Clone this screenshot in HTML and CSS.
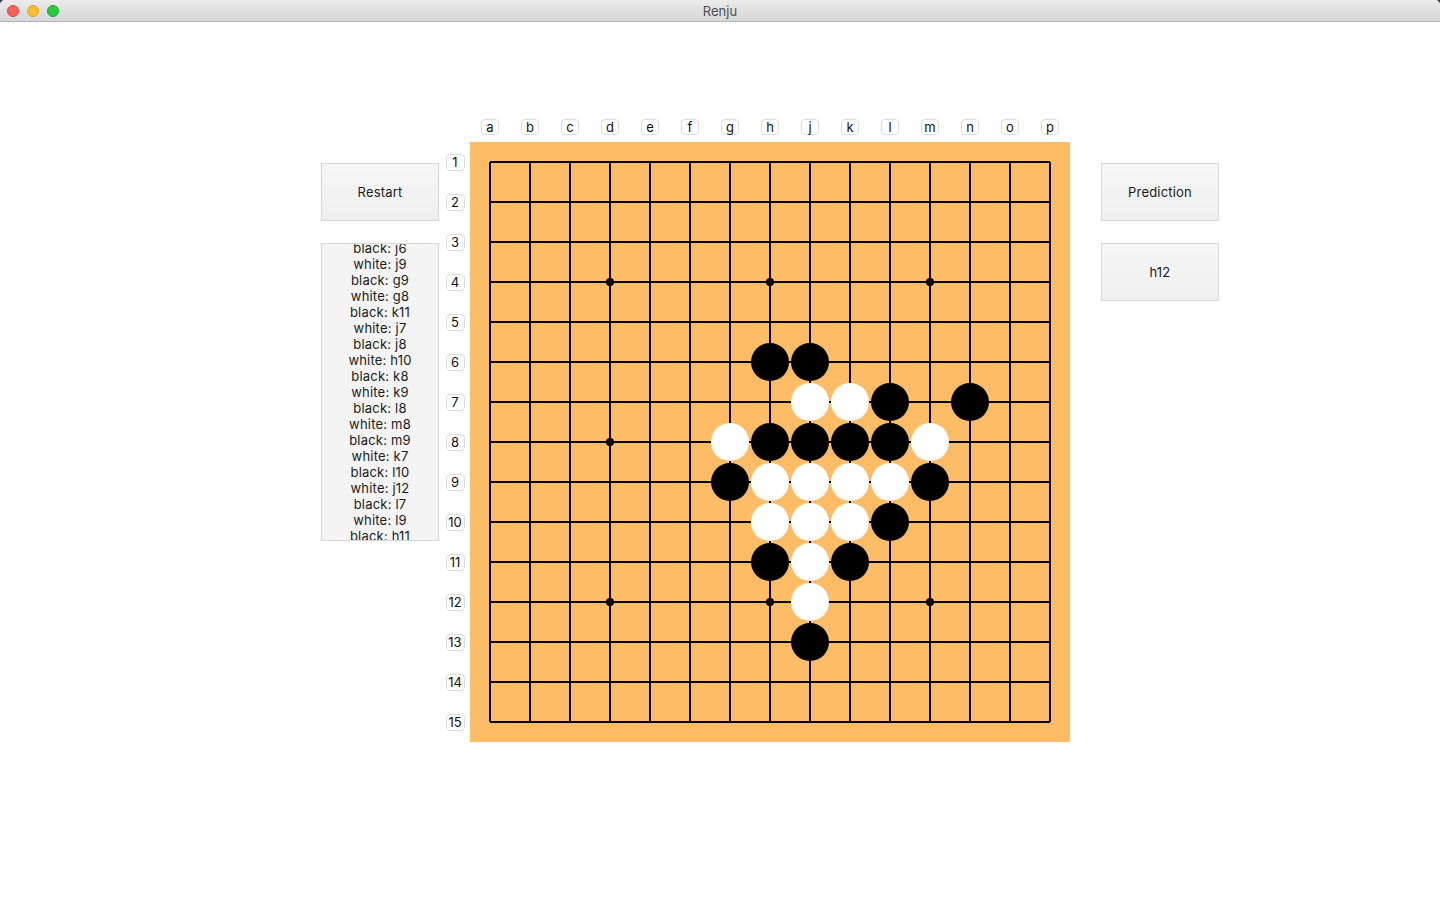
FILE: index.html
```html
<!DOCTYPE html>
<html lang="en">
<head>
<meta charset="utf-8">
<title>Renju</title>
<link rel="stylesheet" href="styles.css">
</head>
<body>
<div class="window">
  <header class="titlebar">
    <div class="lights">
      <span class="light red"></span>
      <span class="light yellow"></span>
      <span class="light green"></span>
    </div>
    <div class="title">Renju</div>
  </header>
  <main class="content">
    <aside class="side side-left">
      <button class="btn">Restart</button>
      <div class="moves">
        <div class="moves-inner">
          <div>black: j6</div>
          <div>white: j9</div>
          <div>black: g9</div>
          <div>white: g8</div>
          <div>black: k11</div>
          <div>white: j7</div>
          <div>black: j8</div>
          <div>white: h10</div>
          <div>black: k8</div>
          <div>white: k9</div>
          <div>black: l8</div>
          <div>white: m8</div>
          <div>black: m9</div>
          <div>white: k7</div>
          <div>black: l10</div>
          <div>white: j12</div>
          <div>black: l7</div>
          <div>white: l9</div>
          <div>black: h11</div>
        </div>
      </div>
    </aside>
    <section class="board-area">
      <div class="corner"></div>
      <div class="col-labels">
        <div class="cell"><span class="tag">a</span></div>
        <div class="cell"><span class="tag">b</span></div>
        <div class="cell"><span class="tag">c</span></div>
        <div class="cell"><span class="tag">d</span></div>
        <div class="cell"><span class="tag">e</span></div>
        <div class="cell"><span class="tag">f</span></div>
        <div class="cell"><span class="tag">g</span></div>
        <div class="cell"><span class="tag">h</span></div>
        <div class="cell"><span class="tag">j</span></div>
        <div class="cell"><span class="tag">k</span></div>
        <div class="cell"><span class="tag">l</span></div>
        <div class="cell"><span class="tag">m</span></div>
        <div class="cell"><span class="tag">n</span></div>
        <div class="cell"><span class="tag">o</span></div>
        <div class="cell"><span class="tag">p</span></div>
      </div>
      <div class="row-labels">
        <div class="cell"><span class="tag tag-row">1</span></div>
        <div class="cell"><span class="tag tag-row">2</span></div>
        <div class="cell"><span class="tag tag-row">3</span></div>
        <div class="cell"><span class="tag tag-row">4</span></div>
        <div class="cell"><span class="tag tag-row">5</span></div>
        <div class="cell"><span class="tag tag-row">6</span></div>
        <div class="cell"><span class="tag tag-row">7</span></div>
        <div class="cell"><span class="tag tag-row">8</span></div>
        <div class="cell"><span class="tag tag-row">9</span></div>
        <div class="cell"><span class="tag tag-row">10</span></div>
        <div class="cell"><span class="tag tag-row">11</span></div>
        <div class="cell"><span class="tag tag-row">12</span></div>
        <div class="cell"><span class="tag tag-row">13</span></div>
        <div class="cell"><span class="tag tag-row">14</span></div>
        <div class="cell"><span class="tag tag-row">15</span></div>
      </div>
      <div class="board">
        <svg width="600" height="600" viewBox="0 0 600 600" xmlns="http://www.w3.org/2000/svg">
          <g stroke="#000" stroke-width="2" shape-rendering="crispEdges" fill="none">
            <path d="M20 20H580M20 60H580M20 100H580M20 140H580M20 180H580M20 220H580M20 260H580M20 300H580M20 340H580M20 380H580M20 420H580M20 460H580M20 500H580M20 540H580M20 580H580"/>
            <path d="M20 20V580M60 20V580M100 20V580M140 20V580M180 20V580M220 20V580M260 20V580M300 20V580M340 20V580M380 20V580M420 20V580M460 20V580M500 20V580M540 20V580M580 20V580"/>
          </g>
          <g fill="#000">
            <circle cx="140" cy="140" r="4"/>
            <circle cx="300" cy="140" r="4"/>
            <circle cx="460" cy="140" r="4"/>
            <circle cx="140" cy="300" r="4"/>
            <circle cx="300" cy="300" r="4"/>
            <circle cx="460" cy="300" r="4"/>
            <circle cx="140" cy="460" r="4"/>
            <circle cx="300" cy="460" r="4"/>
            <circle cx="460" cy="460" r="4"/>
          </g>
          <g fill="#000">
            <circle cx="300" cy="220" r="19"/>
            <circle cx="340" cy="220" r="19"/>
            <circle cx="420" cy="260" r="19"/>
            <circle cx="500" cy="260" r="19"/>
            <circle cx="300" cy="300" r="19"/>
            <circle cx="340" cy="300" r="19"/>
            <circle cx="380" cy="300" r="19"/>
            <circle cx="420" cy="300" r="19"/>
            <circle cx="260" cy="340" r="19"/>
            <circle cx="460" cy="340" r="19"/>
            <circle cx="420" cy="380" r="19"/>
            <circle cx="300" cy="420" r="19"/>
            <circle cx="380" cy="420" r="19"/>
            <circle cx="340" cy="500" r="19"/>
          </g>
          <g fill="#fff">
            <circle cx="340" cy="260" r="19"/>
            <circle cx="380" cy="260" r="19"/>
            <circle cx="260" cy="300" r="19"/>
            <circle cx="460" cy="300" r="19"/>
            <circle cx="300" cy="340" r="19"/>
            <circle cx="340" cy="340" r="19"/>
            <circle cx="380" cy="340" r="19"/>
            <circle cx="420" cy="340" r="19"/>
            <circle cx="300" cy="380" r="19"/>
            <circle cx="340" cy="380" r="19"/>
            <circle cx="380" cy="380" r="19"/>
            <circle cx="340" cy="420" r="19"/>
            <circle cx="340" cy="460" r="19"/>
          </g>
        </svg>
      </div>
    </section>
    <aside class="side side-right">
      <button class="btn">Prediction</button>
      <button class="btn">h12</button>
    </aside>
  </main>
</div>
</body>
</html>
```

FILE: styles.css
```css
* {
  box-sizing: border-box;
}

html {
  background: #2a3446;
}

body {
  margin: 0;
  font-family: Inter, "Liberation Sans", sans-serif;
  font-size: 13px;
  color: #1a1a1a;
}

.window {
  width: 1440px;
  height: 900px;
  background: #ffffff;
  border-radius: 5px 5px 0 0;
  overflow: hidden;
}

.titlebar {
  height: 22px;
  background: linear-gradient(#ebebeb, #d6d6d6);
  border-bottom: 1px solid #b4b4b4;
  display: flex;
  align-items: center;
  justify-content: center;
  position: relative;
}

.lights {
  position: absolute;
  left: 7px;
  top: 5px;
  display: flex;
  gap: 8px;
}

.light {
  width: 12px;
  height: 12px;
  border-radius: 50%;
  display: block;
}

.red {
  background: #fc5f57;
  border: 1px solid #e0443e;
}

.yellow {
  background: #fdbc2e;
  border: 1px solid #dea123;
}

.green {
  background: #29c940;
  border: 1px solid #1aab29;
}

.title {
  font-size: 13px;
  color: #4d4d4d;
  line-height: 22px;
}

.content {
  display: flex;
  align-items: flex-start;
  padding-top: 97px;
  padding-left: 321px;
}

.side {
  width: 118px;
  padding-top: 44px;
  display: flex;
  flex-direction: column;
  gap: 22px;
}

.side-left {
  margin-right: 6px;
}

.side-right {
  margin-left: 31px;
}

.btn {
  width: 118px;
  height: 58px;
  border: 1px solid #d8d8d8;
  background: linear-gradient(#f6f6f6, #efefef);
  font-family: inherit;
  font-size: 13px;
  color: #1a1a1a;
  padding: 0;
  margin: 0;
  letter-spacing: 0.2px;
}

.moves {
  width: 118px;
  height: 298px;
  border: 1px solid #d8d8d8;
  background: #f4f4f4;
  overflow: hidden;
  display: flex;
  flex-direction: column;
  justify-content: center;
}

.moves-inner {
  flex-shrink: 0;
  text-align: center;
  line-height: 16px;
  font-size: 13px;
  color: #1a1a1a;
  letter-spacing: 0.2px;
}

.board-area {
  display: grid;
  grid-template-columns: 20px 600px;
  grid-template-rows: 16px 600px;
  column-gap: 5px;
  row-gap: 7px;
}

.col-labels {
  display: flex;
}

.col-labels .cell {
  width: 40px;
  height: 16px;
  display: flex;
  justify-content: center;
}

.row-labels {
  display: flex;
  flex-direction: column;
}

.row-labels .cell {
  height: 40px;
  display: flex;
  align-items: center;
  justify-content: center;
}

.tag {
  display: flex;
  align-items: center;
  justify-content: center;
  width: 18px;
  height: 16px;
  background: #fff;
  border: 1px solid #dcdcdc;
  border-radius: 4px;
  font-size: 13px;
  color: #111;
  line-height: 1;
}

.tag-row {
  width: 19px;
  height: 17px;
}

.board {
  width: 600px;
  height: 600px;
  background: #ffbc66;
}

.board svg {
  display: block;
}
```
